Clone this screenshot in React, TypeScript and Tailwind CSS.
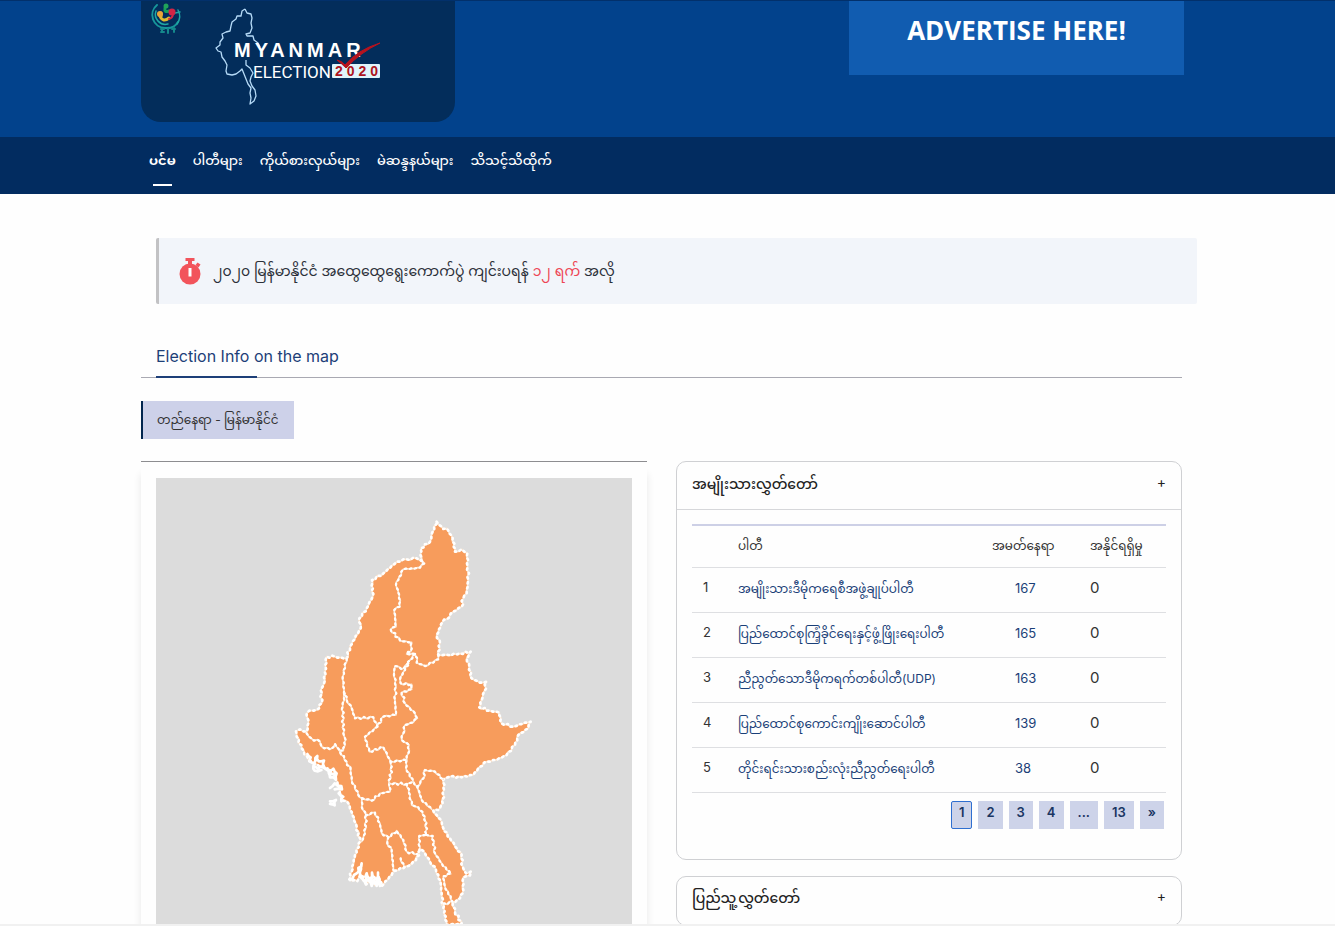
import { useState } from "react";
import { clsx } from "clsx";

const FONT = "font-['Inter','Noto_Sans_Myanmar','Noto_Sans','DejaVu_Sans',sans-serif]";

const NAV_ITEMS = ["ပင်မ", "ပါတီများ", "ကိုယ်စားလှယ်များ", "မဲဆန္ဒနယ်များ", "သိသင့်သိထိုက်"];

const PARTIES = [
  { name: "အမျိုးသားဒီမိုကရေစီအဖွဲ့ချုပ်ပါတီ", seats: 167, won: 0 },
  { name: "ပြည်ထောင်စုကြံ့ခိုင်ရေးနှင့်ဖွံ့ဖြိုးရေးပါတီ", seats: 165, won: 0 },
  { name: "ညီညွတ်သောဒီမိုကရက်တစ်ပါတီ(UDP)", seats: 163, won: 0 },
  { name: "ပြည်ထောင်စုကောင်းကျိုးဆောင်ပါတီ", seats: 139, won: 0 },
  { name: "တိုင်းရင်းသားစည်းလုံးညီညွတ်ရေးပါတီ", seats: 38, won: 0 },
];

const PAGES = ["1", "2", "3", "4", "...", "13", "»"];

type Point = [number, number];

const COUNTRY: Point[] = [
  [470, 65], [485, 80], [505, 92], [518, 115], [525, 155], [545, 148], [562, 160], [563, 200], [565, 240],
  [560, 280], [550, 295], [545, 320], [520, 335], [500, 358], [488, 365], [470, 405], [480, 430], [475, 465],
  [505, 465], [540, 460], [572, 455], [560, 475], [568, 500], [575, 535], [600, 548], [620, 545], [612, 575],
  [605, 600], [598, 622], [630, 632], [658, 638], [665, 670], [700, 680], [735, 668], [752, 665], [745, 685],
  [715, 705], [705, 735], [680, 765], [650, 780], [620, 785], [600, 800], [580, 825], [545, 832], [510, 830],
  [490, 838], [492, 870], [488, 910], [475, 930], [460, 932], [470, 945], [485, 965], [490, 985], [510, 1015],
  [530, 1045], [545, 1065], [548, 1100], [558, 1120], [573, 1114], [570, 1126], [550, 1132], [548, 1180],
  [540, 1195], [518, 1210], [525, 1235], [545, 1272], [500, 1274], [490, 1225], [485, 1190], [482, 1150],
  [468, 1110], [450, 1085], [435, 1060], [422, 1048], [408, 1080], [385, 1098], [345, 1112], [335, 1125],
  [305, 1158], [296, 1130], [284, 1156], [272, 1132], [258, 1154], [242, 1124], [232, 1144], [208, 1138],
  [215, 1115], [225, 1065], [240, 1025], [230, 980], [205, 910], [185, 895], [180, 870], [165, 830],
  [150, 810], [120, 800], [85, 780], [65, 745], [50, 710], [48, 694], [60, 688], [80, 695], [85, 670],
  [80, 640], [88, 632], [110, 630], [125, 610], [122, 570], [132, 550], [140, 470], [165, 470], [190, 475],
  [200, 475], [210, 440], [242, 385], [238, 355], [260, 325], [278, 290], [276, 240], [310, 220], [350, 185],
  [380, 178], [410, 175], [424, 182], [422, 145], [450, 125], [458, 95],
];

const BORDERS: Point[][] = [
  [[424, 182], [434, 190], [420, 203], [370, 208], [355, 240], [348, 255], [358, 285], [360, 320], [343, 330], [348, 380], [332, 388], [360, 422], [395, 427], [392, 455], [380, 462], [405, 462], [412, 475], [410, 488], [435, 498], [475, 478], [475, 465]],
  [[405, 462], [390, 480], [375, 510], [362, 530], [362, 550], [395, 553], [395, 568], [365, 578], [375, 610], [405, 640], [412, 655], [400, 667], [375, 675], [370, 700], [365, 720], [387, 735], [385, 760], [380, 780], [378, 805], [400, 845], [412, 860], [425, 900], [455, 928]],
  [[385, 490], [365, 508], [345, 498], [342, 520], [348, 560], [345, 600], [348, 645], [310, 650], [292, 680], [255, 710], [268, 755], [310, 742], [332, 785], [380, 780]],
  [[292, 680], [280, 652], [225, 655], [215, 625], [200, 600], [192, 575], [188, 530], [200, 475]],
  [[194, 580], [188, 620], [190, 700], [197, 720], [190, 752], [178, 752]],
  [[80, 700], [95, 716], [120, 725], [125, 740], [150, 748], [165, 732], [180, 755], [200, 785], [212, 810], [215, 840], [235, 885], [247, 895], [245, 920], [258, 945], [255, 1000], [245, 1025]],
  [[247, 895], [275, 902], [300, 880], [330, 875], [328, 850], [380, 852], [400, 845]],
  [[332, 785], [335, 800], [328, 850]],
  [[258, 945], [285, 938], [300, 970], [305, 1000], [325, 1012], [350, 992], [370, 1020], [380, 1055], [412, 1062]],
  [[325, 1012], [322, 1030], [335, 1050], [340, 1110]],
  [[362, 1075], [372, 1102]],
  [[380, 852], [390, 885], [395, 915], [415, 922], [435, 950], [440, 1005], [418, 1008], [418, 1050]],
  [[412, 860], [430, 835], [435, 810], [465, 815], [490, 838]],
  [[440, 1005], [458, 1008], [465, 1060], [485, 1090], [512, 1122], [490, 1128], [495, 1160], [518, 1205], [485, 1215]],
];

const ISLANDS: Point[][] = [
  [[82, 762], [92, 772], [88, 784], [100, 790], [112, 768], [116, 784], [132, 782], [130, 800], [114, 806], [100, 798], [104, 812], [124, 810]],
  [[130, 796], [144, 812], [160, 806], [170, 820], [168, 838], [150, 832], [146, 818], [162, 822]],
  [[150, 864], [164, 850], [184, 858], [186, 868], [164, 868]],
  [[176, 880], [190, 890], [184, 904]],
  [[150, 904], [168, 900], [164, 916], [150, 912]],
  [[210, 1140], [230, 1120], [245, 1090], [240, 1125], [256, 1150], [260, 1120], [275, 1158], [276, 1118], [290, 1158], [294, 1118], [300, 1158]],
];

// breaks long segments into short uneven steps so borders look surveyed
function toPath(points: Point[], closed = false) {
  const all = closed ? [...points, points[0]] : points;
  let d = `M${all[0][0]} ${all[0][1]}`;
  for (let i = 1; i < all.length; i++) {
    const [x0, y0] = all[i - 1];
    const [x1, y1] = all[i];
    const length = Math.hypot(x1 - x0, y1 - y0);
    const steps = Math.max(1, Math.round(length / 9));
    for (let s = 1; s <= steps; s++) {
      const t = s / steps;
      const shift = s === steps ? 0 : (s % 2 ? 1 : -1) * (1 + ((i * 7 + s * 3) % 3));
      const x = x0 + (x1 - x0) * t - ((y1 - y0) / length) * shift;
      const y = y0 + (y1 - y0) * t + ((x1 - x0) / length) * shift;
      d += `L${Math.round(x)} ${Math.round(y)}`;
    }
  }
  return d + (closed ? "Z" : "");
}

function MyanmarMap() {
  return (
    <svg viewBox="156 478 476 476" className="block w-full bg-[#dcdcdc]" role="img" aria-label="Myanmar">
      <g transform="translate(280 500) scale(0.33333)" strokeLinejoin="round" strokeLinecap="round">
        <path d={toPath(COUNTRY, true)} fill="#f79c5c" stroke="#fbe3cc" strokeWidth="5" />
        <path d={toPath(COUNTRY, true)} fill="none" stroke="#fff" strokeWidth="8" strokeDasharray="4 11" />
        {BORDERS.map((border, i) => (
          <g key={i} fill="none">
            <path d={toPath(border)} stroke="#fce8d4" strokeWidth="5" />
            <path d={toPath(border)} stroke="#fff" strokeWidth="7" strokeDasharray="4 11" />
          </g>
        ))}
        {ISLANDS.map((island, i) => (
          <path key={i} d={toPath(island)} fill="none" stroke="#fff" strokeWidth="8" />
        ))}
      </g>
    </svg>
  );
}

function Logo() {
  return (
    <a href="#home" aria-label="Myanmar Election 2020" className="block w-[314px] h-[121px] rounded-b-[20px] bg-[#032d5b]">
      <svg viewBox="0 0 314 121" className="w-full h-full">
        {/* commission emblem */}
        <g fill="none" strokeLinecap="round">
          <path d="M16 4a13 13 0 0 0 8 23q9 1 13-6" stroke="#17979b" strokeWidth="2" />
          <path d="M15 10a10 10 0 0 0 12 13M37 9q4 7-1 14M34 12l5-1" stroke="#1fa7a5" strokeWidth="1.5" />
          <path d="M19 15q3 7 9 2M20 12v5" stroke="#e3b92f" strokeWidth="3" />
          <path d="M24 7q-1 5 4 3" stroke="#16a15a" strokeWidth="3" />
          <path d="M32 12q0 5-4 6" stroke="#d12546" strokeWidth="2" />
          <path d="M21 28v3M27 28v4M33 27v4M20 28h3M31 28h3M20 31h3" stroke="#15898c" strokeWidth="2" />
        </g>
        <circle cx="19" cy="13" r="3" fill="#e9a43a" />
        <circle cx="25" cy="5" r="2.5" fill="#20a35a" />
        <circle cx="31" cy="11" r="3.5" fill="#d12546" />
        {/* country outline */}
        <path
          d="M104 8L106 12L110 13L111 17L110 22L111 27L109 32L105 33L106 35L112 35L113 39L117 42L119 46M104 8L101 10L100 15L96 15L95 18L91 21L90 25L89 30L85 31L81 33L82 37L79 41L79 44L75 47L77 50L80 51L81 56L84 60L86 64L85 70L86 73L91 74L95 73L99 70L101 68L103 73L105 78L107 83L110 87L109 92L110 97L109 103L113 100L115 95L114 89L111 85L109 80L110 76L112 72L109 67L105 64L105 59"
          fill="none"
          stroke="#b5daf7"
          strokeWidth="1.3"
          strokeLinejoin="round"
        />
        <text x="93" y="56" fill="#fff" className="font-['Liberation_Sans',sans-serif] font-bold text-[20px] tracking-[4px]">
          MYANMAR
        </text>
        <text x="112" y="77" fill="#fff" className="font-['Roboto',sans-serif] text-[17px]">
          ELECTION
        </text>
        <rect x="191" y="63" width="48" height="14" rx="1" fill="#dff4fb" />
        <text x="194" y="75" fill="#ad1420" className="font-['Liberation_Sans',sans-serif] font-bold text-[14px] tracking-[4px]">
          2020
        </text>
        <path d="M196 59q5 1 8 5 12-15 35-22-19 9-34 25-4-4-9-8z" fill="#b5131f" stroke="#b5131f" />
      </svg>
    </a>
  );
}

function StopwatchIcon() {
  return (
    <svg viewBox="0 0 22 27" className="w-[22px] h-[27px] shrink-0" fill="#f2545b">
      <path d="M6.500 0h9v3h-2.500v3h-4v-3h-2.500z" />
      <circle cx="11" cy="16" r="10.500" />
      <path d="M16.500 7l2-2.500 3 2-2 3z" />
      <path d="M9.500 10h3v8.500h-3z" fill="#fff" />
    </svg>
  );
}

function ResultsTable() {
  return (
    <table className="w-full table-fixed border-collapse text-left text-xs text-[#333]">
      <colgroup>
        <col className="w-[46px]" />
        <col />
        <col className="w-[98px]" />
        <col className="w-[76px]" />
      </colgroup>
      <thead>
        <tr className="h-[42px] border-t-2 border-t-[#cdd0e6] border-b border-b-[#dedfe2] whitespace-nowrap">
          <th aria-label="No." />
          <th className="font-normal">ပါတီ</th>
          <th className="font-normal">အမတ်နေရာ</th>
          <th className="font-normal">အနိုင်ရရှိမှု</th>
        </tr>
      </thead>
      <tbody>
        {PARTIES.map((party, i) => (
          <tr key={party.name} className="h-[45px] border-b border-[#dedfe2] whitespace-nowrap">
            <td className="pl-[11px] pb-1 text-[13px]">{i + 1}</td>
            <td className="pb-[2px]">
              <a href={`#party-${i + 1}`} className="text-[#1a3f78]">{party.name}</a>
            </td>
            <td className="pl-[23px] pb-[2px] text-[13px] text-[#1a3f78]">{party.seats}</td>
            <td className="pb-1 text-[15px]">{party.won}</td>
          </tr>
        ))}
      </tbody>
    </table>
  );
}

function Pagination() {
  const [page, setPage] = useState("1");
  return (
    <nav aria-label="Pages" className="flex justify-end gap-[6px] pr-[2px] mt-2">
      {PAGES.map((label) => (
        <button
          key={label}
          onClick={() => setPage(label)}
          className={clsx(
            "h-7 px-[7px] pb-1 bg-[#cdd3e9] text-[13px] font-semibold text-[#1a3562] border",
            label === page ? "border-[#2f6fd0] rounded-[2px]" : "border-[#cdd3e9]"
          )}
        >
          {label}
        </button>
      ))}
    </nav>
  );
}

export default function App() {
  return (
    <div className={`h-screen overflow-hidden flex flex-col bg-[#fefefe] border-b-2 border-[#f1f1f1] ${FONT}`}>
      <header className="shrink-0">
        <div className="h-[137px] pl-[141px] pr-[151px] flex justify-between items-start bg-[#02428c] border-t border-[#02306b]">
          <Logo />
          <a
            href="#advertise"
            className="w-[335px] h-[74px] pt-[11px] bg-[#115cb0] text-center text-white font-['Open_Sans',sans-serif] font-bold text-[26px] leading-9"
          >
            ADVERTISE HERE!
          </a>
        </div>
        <nav className="h-[57px] pl-[149px] flex gap-[17px] bg-[#022c60] text-white text-[13px] font-medium whitespace-nowrap">
          {NAV_ITEMS.map((item, i) => (
            <a
              key={item}
              href={`#nav-${i}`}
              className={clsx("flex flex-col items-center leading-[47px]", i === 0 && "font-bold")}
            >
              {item}
              {i === 0 && <span className="w-[19px] h-[2px] bg-white" />}
            </a>
          ))}
        </nav>
      </header>

      <main className="pl-[141px] pr-[153px] flex-1 min-h-0">
        <section className="mt-[44px] ml-[15px] -mr-[15px] h-[66px] pl-5 flex items-center gap-3 bg-[#f2f5fa] border-l-[3px] border-[#c2c2c4] rounded-[2px] text-sm text-[#2b2f38]">
          <StopwatchIcon />
          <p className="whitespace-nowrap">
            ၂၀၂၀ မြန်မာနိုင်ငံ အထွေထွေရွေးကောက်ပွဲ ကျင်းပရန် <span className="text-[#ee4453]">၁၂ ရက်</span> အလို
          </p>
        </section>

        <div className="mt-[40px] pl-[15px] border-b border-[#a9a9b2]">
          <h2 className="text-base leading-6 text-[#1d3f78]">Election Info on the map</h2>
          <div className="mt-[8px] w-[101px] h-[2px] -mb-px bg-[#1d3f78]" />
        </div>

        <div className="mt-[23px] w-fit min-w-[153px] h-[38px] px-[14px] flex items-center bg-[#cdd1e9] border-l-2 border-[#02264f] text-xs text-[#333] whitespace-nowrap">
          တည်နေရာ - မြန်မာနိုင်ငံ
        </div>

        <div className="mt-[22px] grid grid-cols-2 gap-[29px] items-start">
          <div className="border-t border-[#8d8d90]">
            <div className="p-[15px] pt-4 shadow-[0_12px_8px_rgba(0,0,0,0.09)]">
              <MyanmarMap />
            </div>
          </div>

          <div className="min-w-0">
            <section className="border border-[#cfd0d3] rounded-[10px] pb-[30px]">
              <button className="w-full h-12 px-[15px] pb-[3px] flex items-center justify-between border-b border-[#d6d7da] text-sm font-medium text-[#222]">
                <span>အမျိုးသားလွှတ်တော်</span>
                <span className="pb-1 font-normal">+</span>
              </button>
              <div className="px-[15px] pt-[14px]">
                <ResultsTable />
                <Pagination />
              </div>
            </section>

            <section className="mt-4 border border-[#cfd0d3] rounded-[10px]">
              <button className="w-full h-12 px-[15px] pb-[5px] flex items-center justify-between text-sm font-medium text-[#222]">
                <span>ပြည်သူ့လွှတ်တော်</span>
                <span className="pb-1 font-normal">+</span>
              </button>
            </section>
          </div>
        </div>
      </main>
    </div>
  );
}
